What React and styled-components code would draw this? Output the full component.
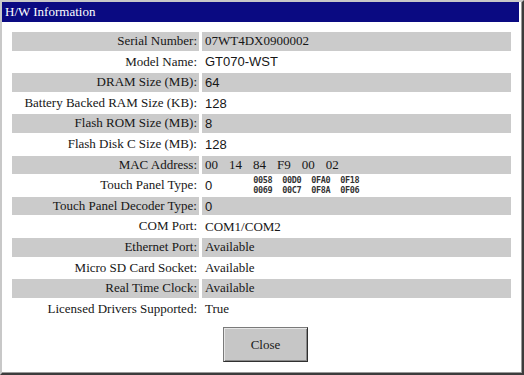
import React from 'react';
import styled, { createGlobalStyle } from 'styled-components';

const GlobalStyle = createGlobalStyle`
  html, body {
    margin: 0;
    padding: 0;
    background: #ffffff;
  }
  body {
    font-family: 'Liberation Serif', 'Times New Roman', serif;
  }
`;

const rows = [
  { label: 'Serial Number:', value: '07WT4DX0900002' },
  { label: 'Model Name:', value: 'GT070-WST', sans: true },
  { label: 'DRAM Size (MB):', value: '64', sans: true },
  { label: 'Battery Backed RAM Size (KB):', value: '128', sans: true },
  { label: 'Flash ROM Size (MB):', value: '8', sans: true },
  { label: 'Flash Disk C Size (MB):', value: '128', sans: true },
  { label: 'MAC Address:', mac: ['00', '14', '84', 'F9', '00', '02'] },
  { label: 'Touch Panel Type:', touch: true },
  { label: 'Touch Panel Decoder Type:', value: '0', sans: true },
  { label: 'COM Port:', value: 'COM1/COM2' },
  { label: 'Ethernet Port:', value: 'Available' },
  { label: 'Micro SD Card Socket:', value: 'Available' },
  { label: 'Real Time Clock:', value: 'Available' },
  { label: 'Licensed Drivers Supported:', value: 'True' },
];

const hex = ['0058', '00D0', '0FA0', '0F18', '0069', '00C7', '0F8A', '0F06'];

export default function App() {
  return (
    <>
      <GlobalStyle />
      <Window>
        <TitleBar>H/W Information</TitleBar>
        <Body>
          <InfoGrid>
            {rows.map((r, i) => (
              <React.Fragment key={r.label}>
                <Label $shaded={i % 2 === 0}>{r.label}</Label>
                <Value $shaded={i % 2 === 0} $sans={r.sans}>
                  {r.mac && (
                    <MacList>
                      {r.mac.map((m, j) => <span key={j}>{m}</span>)}
                    </MacList>
                  )}
                  {r.touch && (
                    <>
                      <Zero>0</Zero>
                      <HexGrid>
                        {hex.map((h, j) => <span key={j}>{h}</span>)}
                      </HexGrid>
                    </>
                  )}
                  {r.value}
                </Value>
              </React.Fragment>
            ))}
          </InfoGrid>
          <ButtonRow>
            <CloseButton>Close</CloseButton>
          </ButtonRow>
        </Body>
      </Window>
    </>
  );
}

const Window = styled.div`
  width: 524px;
  height: 375px;
  box-sizing: border-box;
  display: flex;
  flex-direction: column;
  background: #ffffff;
  border: 2px solid;
  border-color: #c8c8c8 #3c3c3c #3c3c3c #c8c8c8;
  box-shadow: inset -1px -1px 0 #9a9a9a;
  overflow: hidden;
`;

const TitleBar = styled.div`
  height: 20px;
  margin-right: 3px;
  padding-left: 3px;
  display: flex;
  align-items: center;
  background: #0a0a82;
  color: #ffffff;
  font-size: 13px;
  line-height: 20px;
`;

const Body = styled.div`
  flex: 1;
  padding: 10px 11px 0 10px;
  display: flex;
  flex-direction: column;
`;

const InfoGrid = styled.div`
  display: grid;
  grid-template-columns: 187px 1fr;
  grid-auto-rows: 18.6px;
  column-gap: 3px;
  row-gap: 2px;
  font-size: 13px;
  color: #161616;
`;

const Label = styled.div`
  background: ${p => (p.$shaded ? '#cbcbcb' : 'transparent')};
  text-align: right;
  padding-right: 2px;
  line-height: 18.6px;
  white-space: nowrap;
`;

const Value = styled.div`
  background: ${p => (p.$shaded ? '#cbcbcb' : 'transparent')};
  padding-left: 3px;
  display: flex;
  align-items: center;
  white-space: nowrap;
  font-family: ${p => (p.$sans ? "'Liberation Sans', Arial, sans-serif" : "'Liberation Serif', 'Times New Roman', serif")};
`;

const MacList = styled.div`
  display: flex;
  gap: 11px;
`;

const Zero = styled.span`
  font-family: 'Liberation Sans', Arial, sans-serif;
`;

const HexGrid = styled.div`
  margin-left: 41px;
  display: grid;
  grid-template-columns: repeat(4, 19px);
  column-gap: 10px;
  font-family: 'DejaVu Sans Mono', 'Liberation Mono', monospace;
  font-weight: bold;
  font-size: 8.5px;
  letter-spacing: -0.4px;
  line-height: 10px;
  color: #333333;
`;

const ButtonRow = styled.div`
  display: flex;
  justify-content: center;
  padding-left: 8px;
  margin-top: 9px;
`;

const CloseButton = styled.button`
  width: 85px;
  height: 35px;
  box-sizing: border-box;
  background: #c6c6c6;
  border: 1px solid;
  border-color: #7a7a7a #303030 #303030 #7a7a7a;
  box-shadow: inset 1px 1px 0 #e6e6e6, inset -1px -1px 0 #8a8a8a;
  font-family: 'Liberation Serif', 'Times New Roman', serif;
  font-size: 13px;
  color: #1a1a1a;
  padding: 0;
`;
